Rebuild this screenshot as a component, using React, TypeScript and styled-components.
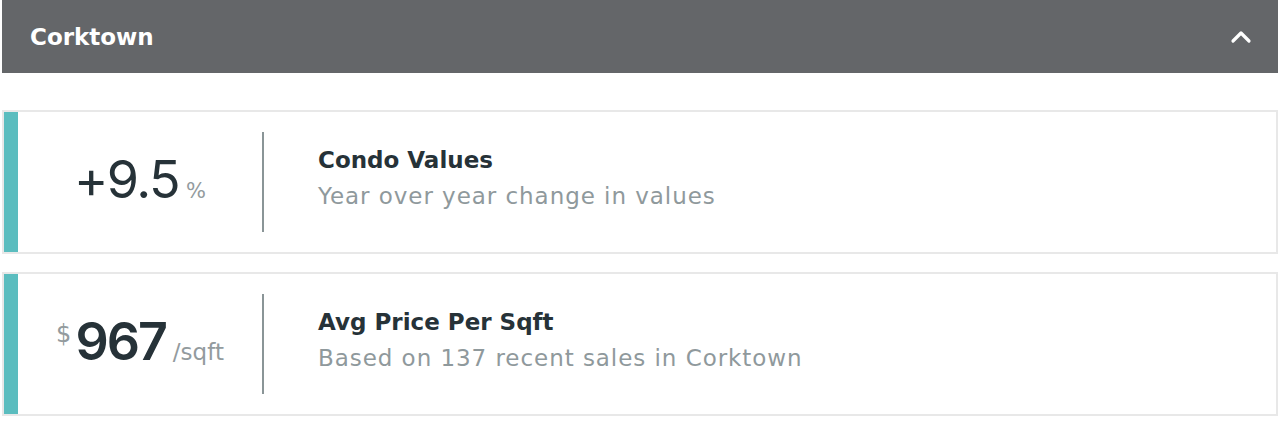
import React from "react";
import styled, { createGlobalStyle } from "styled-components";

const Global = createGlobalStyle`
  html, body { margin: 0; padding: 0; background: #ffffff; }
  body { font-family: "DejaVu Sans", Inter, sans-serif; }
`;

const Page = styled.div`
  width: 1276px;
  margin: 0 2px;
  display: flex;
  flex-direction: column;
`;

const Header = styled.div`
  height: 73px;
  background: #646669;
  display: flex;
  align-items: center;
  justify-content: space-between;
  padding: 0 26px 0 28px;
  box-sizing: border-box;
`;

const HeaderTitle = styled.div`
  color: #ffffff;
  font-size: 23px;
  font-weight: 700;
  line-height: 28px;
`;

const Cards = styled.div`
  margin-top: 37px;
  display: flex;
  flex-direction: column;
  gap: 18px;
`;

const Card = styled.div`
  height: 144px;
  box-sizing: border-box;
  border: 2px solid #e8e8e8;
  display: flex;
  align-items: stretch;
`;

const Accent = styled.div`
  width: 14px;
  background: #5bbdbf;
`;

const ValueBox = styled.div`
  width: 244px;
  display: flex;
  align-items: center;
  justify-content: center;
  color: #263238;
`;

const ValueLine = styled.div`
  display: flex;
  align-items: baseline;
  padding-bottom: 4px;
`;

const Big = styled.span<{ $weight?: number }>`
  font-family: Inter, sans-serif;
  font-size: 52px;
  line-height: 60px;
  font-weight: ${(p) => p.$weight ?? 400};
  letter-spacing: ${(p) => ((p.$weight ?? 400) > 400 ? "-2px" : "-1.5px")};
`;

const Unit = styled.span<{ $size: number; $gap: string; $raise?: number }>`
  color: #939b9e;
  font-size: ${(p) => p.$size}px;
  margin: ${(p) => p.$gap};
  position: relative;
  top: ${(p) => -(p.$raise ?? 0)}px;
`;

const Divider = styled.div`
  width: 2px;
  height: 100px;
  align-self: center;
  background: #8a9597;
`;

const TextBlock = styled.div`
  padding: 0 0 8px 54px;
  display: flex;
  flex-direction: column;
  justify-content: center;
  gap: 8px;
`;

const Title = styled.div`
  font-size: 23px;
  line-height: 28px;
  font-weight: 700;
  color: #263238;
`;

const Sub = styled.div`
  font-size: 23px;
  line-height: 28px;
  letter-spacing: 0.95px;
  color: #8f999c;
`;

function Chevron() {
  return (
    <svg width="22" height="14" viewBox="0 0 22 14">
      <path d="M3 11 L11 3 L19 11" fill="none" stroke="#fff" strokeWidth="3.2" strokeLinecap="round" strokeLinejoin="round" />
    </svg>
  );
}

export default function App() {
  return (
    <>
      <Global />
      <Page>
        <Header>
          <HeaderTitle>Corktown</HeaderTitle>
          <Chevron />
        </Header>
        <Cards>
          <Card>
            <Accent />
            <ValueBox>
              <ValueLine>
                <Big>+9.5</Big>
                <Unit $size={21} $gap="0 0 0 7px">%</Unit>
              </ValueLine>
            </ValueBox>
            <Divider />
            <TextBlock>
              <Title>Condo Values</Title>
              <Sub>Year over year change in values</Sub>
            </TextBlock>
          </Card>
          <Card>
            <Accent />
            <ValueBox>
              <ValueLine>
                <Unit $size={24} $gap="0 4px 0 0" $raise={18}>$</Unit>
                <Big $weight={600}>967</Big>
                <Unit $size={23} $gap="0 0 0 7px">/sqft</Unit>
              </ValueLine>
            </ValueBox>
            <Divider />
            <TextBlock>
              <Title>Avg Price Per Sqft</Title>
              <Sub>Based on 137 recent sales in Corktown</Sub>
            </TextBlock>
          </Card>
        </Cards>
      </Page>
    </>
  );
}
